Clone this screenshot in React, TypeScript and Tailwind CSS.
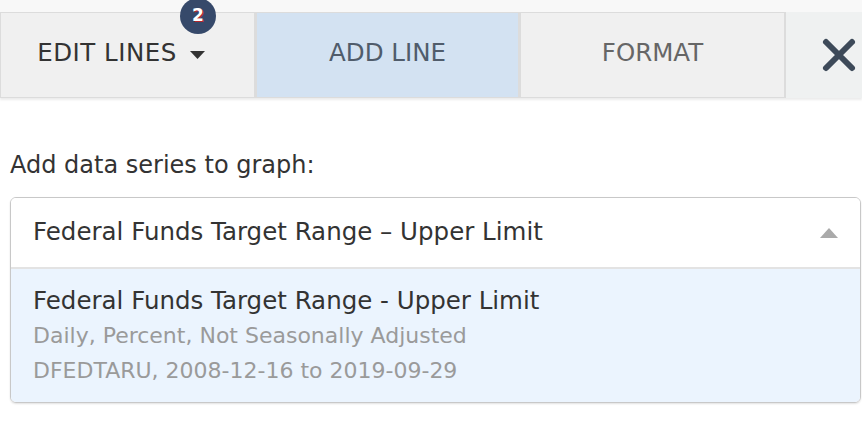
import { useState } from "react";

const tabs = [
  { id: "edit", label: "EDIT LINES", width: "w-[256px]" },
  { id: "add", label: "ADD LINE", width: "w-[264px]" },
  { id: "format", label: "FORMAT", width: "w-[266px]" },
];

const series = {
  title: "Federal Funds Target Range - Upper Limit",
  meta: "Daily, Percent, Not Seasonally Adjusted",
  range: "DFEDTARU, 2008-12-16 to 2019-09-29",
};

export default function App() {
  const [active, setActive] = useState<string>("add");

  return (
    <div className="h-[424px] w-[862px] overflow-hidden bg-white font-['DejaVu_Sans',sans-serif]">
      {/* tab strip */}
      <div className="bg-[#f8f8f8] pt-3">
        <div className="flex h-[86px] shadow-[0_2px_2px_rgba(0,0,0,0.08)]">
          {tabs.map((tab) => (
            <button
              key={tab.id}
              onClick={() => setActive(tab.id)}
              className={`relative flex shrink-0 items-center justify-center border border-r-2 border-[#dcdcdc] pb-1 text-[24.5px] ${tab.width} ${
                active === tab.id
                  ? "bg-[#d3e2f2] text-[#505c6b]"
                  : tab.id === "edit"
                  ? "bg-[#f0f0f0] pr-[13px] tracking-[0.5px] text-[#333]"
                  : "bg-[#f0f0f0] text-[#666]"
              }`}
            >
              <span>{tab.label}</span>
              {tab.id === "edit" && (
                <>
                  <svg className="ml-[13px] mt-1" width="15" height="9" viewBox="0 0 15 9">
                    <path d="M0 0 L15 0 L7.5 8 Z" fill="#333" />
                  </svg>
                  <span className="absolute left-[179px] top-[-15px] flex h-[36px] w-[36px] items-center justify-center rounded-full bg-[#36496a] text-[17px] font-bold tracking-normal text-white [text-shadow:1px_1px_0_#b3262c]">
                    2
                  </span>
                </>
              )}
            </button>
          ))}
          <button className="flex flex-1 items-center bg-[#eff1f1] pl-[35px]">
            <svg width="36" height="36" viewBox="0 0 36 36">
              <path d="M5 5 L31 31 M31 5 L5 31" stroke="#3d4a59" strokeWidth="6" strokeLinecap="round" />
            </svg>
          </button>
        </div>
      </div>

      {/* add series panel */}
      <div className="pl-[10px] pr-[1px] pt-[53px]">
        <p className="text-[24px] leading-[28px] text-[#333]">Add data series to graph:</p>

        <div className="mt-[18px] overflow-hidden rounded-[6px] border border-[#c8c8c8] shadow-[0_1px_2px_rgba(0,0,0,0.12)]">
          <div className="flex h-[71px] items-center justify-between border-b-2 border-[#e3e3e3] bg-white pl-[22px] pr-[22px]">
            <span className="text-[24.5px] text-[#333]">Federal Funds Target Range – Upper Limit</span>
            <svg width="18" height="10" viewBox="0 0 18 10">
              <path d="M0 10 L9 0 L18 10 Z" fill="#aaa" />
            </svg>
          </div>
          <div className="bg-[#ebf4fe] pb-[14px] pl-[22px] pt-[14px] leading-[35px]">
            <div className="text-[24.5px] text-[#333]">{series.title}</div>
            <div className="text-[22px] text-[#9a9a9a]">{series.meta}</div>
            <div className="text-[22px] text-[#9a9a9a]">{series.range}</div>
          </div>
        </div>
      </div>
    </div>
  );
}
